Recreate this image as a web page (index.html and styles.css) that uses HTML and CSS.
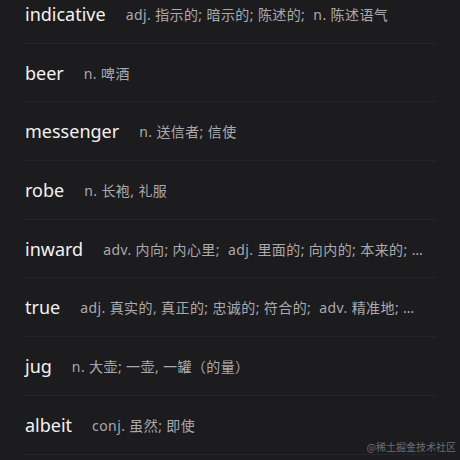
FILE: index.html
```html
<!DOCTYPE html>
<html lang="zh">
<head>
<meta charset="utf-8">
<link rel="stylesheet" href="styles.css">
</head>
<body>
<ul class="list">
  <li class="row"><span class="word">indicative</span><span class="def">adj. 指示的; 暗示的; 陈述的;&nbsp; n. 陈述语气</span></li>
  <li class="row"><span class="word">beer</span><span class="def">n. 啤酒</span></li>
  <li class="row"><span class="word">messenger</span><span class="def">n. 送信者; 信使</span></li>
  <li class="row"><span class="word">robe</span><span class="def">n. 长袍, 礼服</span></li>
  <li class="row"><span class="word">inward</span><span class="def">adv. 内向; 内心里;&nbsp; adj. 里面的; 向内的; 本来的; 固有的</span></li>
  <li class="row"><span class="word">true</span><span class="def">adj. 真实的, 真正的; 忠诚的; 符合的;&nbsp; adv. 精准地; 真实地</span></li>
  <li class="row"><span class="word">jug</span><span class="def">n. 大壶; 一壶, 一罐（的量）</span></li>
  <li class="row"><span class="word">albeit</span><span class="def">conj. 虽然; 即使</span></li>
</ul>
<div class="watermark">@稀土掘金技术社区</div>
</body>
</html>
```

FILE: styles.css
```css
html, body {
  margin: 0;
  padding: 0;
  background: #1c1b1d;
  width: 460px;
  height: 460px;
  overflow: hidden;
}
body {
  font-family: "Noto Sans", "Noto Sans CJK SC", sans-serif;
  position: relative;
}
.list {
  list-style: none;
  margin: -15px 24px 0 24px;
  padding: 0;
}
.row {
  height: 58.7px;
  box-sizing: border-box;
  border-bottom: 1px solid #262528;
  display: flex;
  align-items: center;
  gap: 20px;
  padding-left: 1px;
  white-space: nowrap;
  overflow: hidden;
}
.word {
  font-size: 18px;
  color: #f2f2f4;
  flex: none;
}
.def {
  font-size: 14px;
  letter-spacing: 0.4px;
  color: #aaaaae;
  overflow: hidden;
  text-overflow: ellipsis;
  min-width: 0;
  padding-right: 12px;
}
.watermark {
  position: absolute;
  right: 4px;
  bottom: 6px;
  font-size: 10px;
  color: #6f6e72;
  font-family: "Noto Sans CJK SC", sans-serif;
}
```
